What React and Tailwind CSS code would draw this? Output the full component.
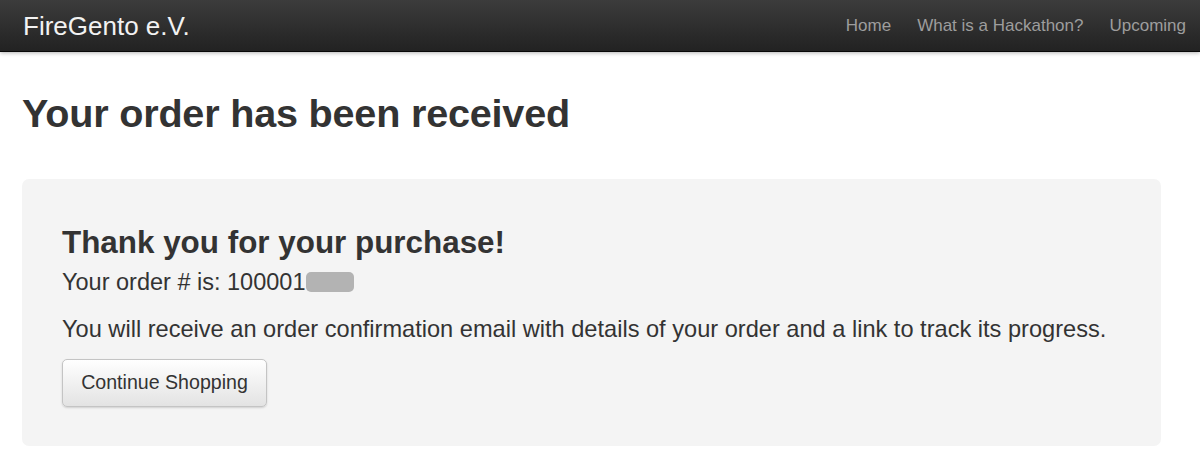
export default function App() {
  const font = { fontFamily: '"Liberation Sans", Arial, sans-serif' };

  return (
    <div style={font} className="min-h-[469px] bg-white text-[#333]">
      <nav className="flex h-[52px] items-center justify-between border-b border-[#080808] bg-gradient-to-b from-[#3c3c3c] to-[#222222] shadow-[0_1px_4px_rgba(0,0,0,0.3)]">
        <a className="pl-[23px] text-[26px] leading-none text-[#f2f2f2]">FireGento e.V.</a>
        <ul className="flex items-center pr-[1px] text-[17px] text-[#9d9d9d]">
          <li className="px-[13px]">Home</li>
          <li className="px-[13px]">What is a Hackathon?</li>
          <li className="px-[13px]">Upcoming</li>
        </ul>
      </nav>

      <main className="px-[22px]">
        <h1 className="mt-[42px] text-[39.6px] font-bold leading-none tracking-[-0.2px] text-[#333]">
          Your order has been received
        </h1>

        <section className="mt-[45px] w-[1139px] rounded-[7px] bg-[#f4f4f4] px-[40px] pb-[39px] pt-[47px]">
          <h2 className="text-[31.4px] font-bold leading-[34px] text-[#333]">Thank you for your purchase!</h2>
          <p className="mt-[8px] flex items-center text-[23.5px] leading-[28px]">
            Your order # is: 100001
            <span className="ml-[1px] inline-block h-[20px] w-[48px] rounded-[5px] bg-[#b3b3b3]" />
          </p>
          <p className="mt-[19px] text-[23.6px] leading-[28px]">
            You will receive an order confirmation email with details of your order and a link to track its progress.
          </p>
          <button className="mt-[16px] h-[48px] w-[205px] rounded-[5px] border border-[#c4c4c4] bg-gradient-to-b from-white to-[#e3e3e3] text-[19.6px] text-[#333] shadow-[0_1px_2px_rgba(0,0,0,0.15)]">
            Continue Shopping
          </button>
        </section>
      </main>
    </div>
  );
}
